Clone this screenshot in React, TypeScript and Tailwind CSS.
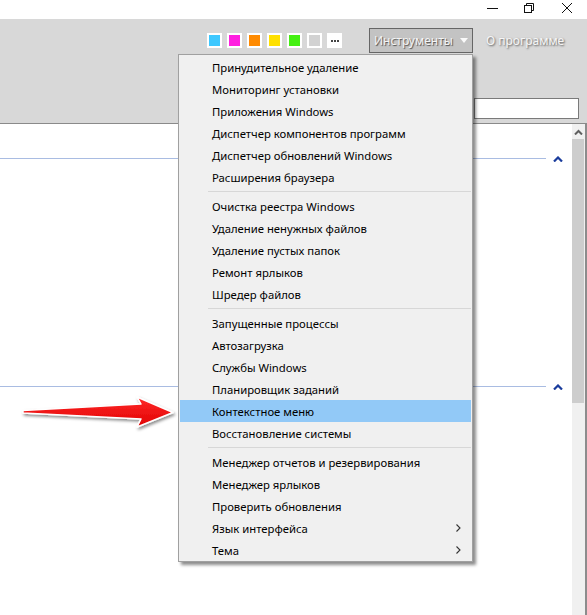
import React from "react";

const font = { fontFamily: '"Noto Sans", "Open Sans", Arial, sans-serif' };

type Item = { label: string; sub?: boolean; active?: boolean };
const groups: Item[][] = [
  [
    { label: "Принудительное удаление" },
    { label: "Мониторинг установки" },
    { label: "Приложения Windows" },
    { label: "Диспетчер компонентов программ" },
    { label: "Диспетчер обновлений Windows" },
    { label: "Расширения браузера" },
  ],
  [
    { label: "Очистка реестра Windows" },
    { label: "Удаление ненужных файлов" },
    { label: "Удаление пустых папок" },
    { label: "Ремонт ярлыков" },
    { label: "Шредер файлов" },
  ],
  [
    { label: "Запущенные процессы" },
    { label: "Автозагрузка" },
    { label: "Службы Windows" },
    { label: "Планировщик заданий" },
    { label: "Контекстное меню", active: true },
    { label: "Восстановление системы" },
  ],
  [
    { label: "Менеджер отчетов и резервирования" },
    { label: "Менеджер ярлыков" },
    { label: "Проверить обновления" },
    { label: "Язык интерфейса", sub: true },
    { label: "Тема", sub: true },
  ],
];

const swatches = ["bg-[#3ec8ff]", "bg-[#ff1fe0]", "bg-[#ff8a00]", "bg-[#ffe000]", "bg-[#44f012]", "bg-[#d2d2d2]"];

function Chevron() {
  return (
    <svg width="10" height="6" viewBox="0 0 10 6" className="block">
      <path d="M1 5.5 L5 1.5 L9 5.5" fill="none" stroke="#1a3c9c" strokeWidth="2.2" />
    </svg>
  );
}

export default function App() {
  return (
    <div className="relative w-[587px] h-[615px] overflow-hidden bg-white flex flex-col" style={font}>
      {/* title bar */}
      <div className="h-[19px] bg-white flex items-start justify-end shrink-0">
        <svg width="587" height="19" className="block">
          <line x1="487" y1="8.5" x2="498" y2="8.5" stroke="#111" strokeWidth="1" />
          <rect x="524.5" y="5.5" width="7" height="7" fill="none" stroke="#111" strokeWidth="1" />
          <path d="M526.5 5.5 V3.5 H533.5 V10.5 H531.5" fill="none" stroke="#111" strokeWidth="1" />
          <path d="M562 3 L572 13 M572 3 L562 13" stroke="#111" strokeWidth="1" />
        </svg>
      </div>

      {/* header */}
      <div className="h-[105px] shrink-0 bg-[#d8d8d8] border-b border-[#8a8a8a] pt-[9px] flex flex-col">
        <div className="flex items-center h-[25px] pl-[207px]">
          <div className="flex gap-[5px]">
            {swatches.map((c) => (
              <div key={c} className="w-[15px] h-[15px] bg-white p-[2px]">
                <div className={`w-full h-full ${c}`} />
              </div>
            ))}
            <div className="w-[15px] h-[15px] bg-white flex items-center justify-center gap-[1px]">
              <span className="w-[2px] h-[2px] bg-[#444]" />
              <span className="w-[2px] h-[2px] bg-[#444]" />
              <span className="w-[2px] h-[2px] bg-[#444]" />
            </div>
          </div>
          <div className="ml-[27px] w-[104px] h-[25px] border border-[#666] bg-[#c3c3c3] flex items-center pl-[4px] text-[12px] text-[#f4f4f4] [text-shadow:1px_1px_1px_rgba(0,0,0,0.6)]">
            <span>Инструменты</span>
            <svg width="8" height="5" viewBox="0 0 8 5" className="ml-auto mr-[4px]">
              <path d="M0 0 H8 L4 5 Z" fill="#fafafa" />
            </svg>
          </div>
          <span className="ml-[13px] text-[12px] text-[#f6f6f6] [text-shadow:1px_1px_2px_rgba(0,0,0,0.6)]">О программе</span>
        </div>
        <div className="mt-[45px] ml-[474px] w-[105px] h-[21px] bg-white border border-[#7a7a7a]" />
      </div>

      {/* content */}
      <div className="flex-1 flex">
        <div className="flex-1 flex flex-col">
          <div className="mt-[34px] flex items-center h-[1px]">
            <div className="w-[546px] h-[1px] bg-[#a9bce2]" />
            <div className="ml-[7px]"><Chevron /></div>
          </div>
          <div className="mt-[227px] flex items-center h-[1px]">
            <div className="w-[546px] h-[1px] bg-[#a9bce2]" />
            <div className="ml-[7px]"><Chevron /></div>
          </div>
        </div>
        <div className="w-[13px] bg-[#f0f0f0] flex flex-col">
          <div className="h-[15px] flex items-center justify-center">
            <svg width="9" height="6" viewBox="0 0 9 6">
              <path d="M1 5.5 L4.5 2 L8 5.5" fill="none" stroke="#606060" strokeWidth="2" />
            </svg>
          </div>
          <div className="h-[264px] w-[12px] bg-[#cdcdcd]" />
        </div>
        <div className="w-[2px] bg-[#8c8c8c]" />
      </div>

      {/* dropdown menu */}
      <div className="absolute left-[178px] top-[54px] w-[295px] bg-[#f0f0f0] border border-[#a0a0a0] p-[1px] pb-[0px] shadow-[3px_3px_3px_rgba(0,0,0,0.45)] text-[11.3px] text-black">
        {groups.map((g, gi) => (
          <div key={gi}>
            {gi > 0 && (
              <div className="h-[7px] flex items-center">
                <div className="ml-[28px] flex-1 h-[1px] bg-[#d7d7d7]" />
              </div>
            )}
            {g.map((it) => (
              <div
                key={it.label}
                className={`h-[22px] flex items-center pl-[32px] pr-[10px] pt-[2px] ${it.active ? "bg-[#92c9f7]" : ""}`}
              >
                <span className="flex-1 whitespace-nowrap">{it.label}</span>
                {it.sub && (
                  <svg width="5" height="8" viewBox="0 0 5 8" className="-mt-[2px]">
                    <path d="M0.5 0.5 L4 4 L0.5 7.5" fill="none" stroke="#333" strokeWidth="1.1" />
                  </svg>
                )}
              </div>
            ))}
          </div>
        ))}
      </div>

      {/* red arrow */}
      <svg className="absolute left-0 top-[390px]" width="185" height="45" viewBox="0 390 185 45">
        <defs>
          <linearGradient id="rg" x1="0" y1="0" x2="0" y2="1">
            <stop offset="0" stopColor="#ff2a2a" />
            <stop offset="1" stopColor="#e00000" />
          </linearGradient>
          <filter id="sh" x="-10%" y="-30%" width="130%" height="170%">
            <feDropShadow dx="1.5" dy="2" stdDeviation="1.5" floodColor="#000" floodOpacity="0.45" />
          </filter>
        </defs>
        <polygon
          points="23,410.5 141,404 137,397 173,412.5 137,427 141,419 23,413"
          fill="url(#rg)"
          stroke="#ffffff"
          strokeWidth="1.5"
          strokeLinejoin="round"
          filter="url(#sh)"
        />
      </svg>
    </div>
  );
}
